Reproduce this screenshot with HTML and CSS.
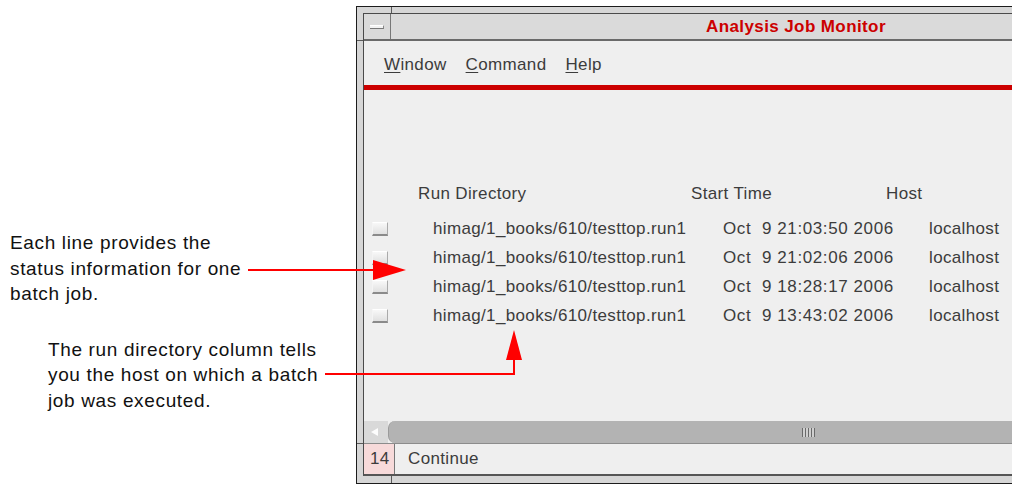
FILE: index.html
```html
<!DOCTYPE html>
<html lang="en">
<head>
  <meta charset="UTF-8">
  <title>Analysis Job Monitor</title>
  <link rel="stylesheet" href="styles.css">
</head>
<body>

  <div class="page">

    <!-- Callout texts -->
    <div class="notes">
      <p class="note note-lines">Each line provides the<br>status information for one<br>batch job.</p>
      <p class="note note-dir">The run directory column tells<br>you the host on which a batch<br>job was executed.</p>
    </div>

    <!-- Monitor window -->
    <div class="frame">
      <div class="inner">
        <div class="titlebar">
          <div class="wm-btn"><span class="wm-min"></span></div>
          <div class="title">Analysis Job Monitor</div>
        </div>

        <div class="menubar">
          <span class="menu-item"><u>W</u>indow</span>
          <span class="menu-item"><u>C</u>ommand</span>
          <span class="menu-item"><u>H</u>elp</span>
        </div>
        <div class="rule"></div>

        <div class="jobs">
          <div class="head">
            <span class="h-dir">Run Directory</span>
            <span class="h-time">Start Time</span>
            <span>Host</span>
          </div>
          <div class="row">
            <span class="check"></span>
            <span class="dir">himag/1_books/610/testtop.run1</span>
            <span class="time">Oct  9 21:03:50 2006</span>
            <span>localhost</span>
          </div>
          <div class="row">
            <span class="check"></span>
            <span class="dir">himag/1_books/610/testtop.run1</span>
            <span class="time">Oct  9 21:02:06 2006</span>
            <span>localhost</span>
          </div>
          <div class="row">
            <span class="check"></span>
            <span class="dir">himag/1_books/610/testtop.run1</span>
            <span class="time">Oct  9 18:28:17 2006</span>
            <span>localhost</span>
          </div>
          <div class="row">
            <span class="check"></span>
            <span class="dir">himag/1_books/610/testtop.run1</span>
            <span class="time">Oct  9 13:43:02 2006</span>
            <span>localhost</span>
          </div>
        </div>

        <div class="scrollbar">
          <div class="scroll-btn"><span class="arrow-left"></span></div>
          <div class="trough"><span class="grip"></span></div>
        </div>

        <div class="status">
          <span class="status-num">14</span>
          <span class="status-text">Continue</span>
        </div>
      </div>
    </div>

    <!-- Callout arrows -->
    <svg class="callouts" width="1012" height="488" viewBox="0 0 1012 488">
      <line x1="248" y1="270" x2="378" y2="270" stroke="#ff0000" stroke-width="2"/>
      <polygon points="373,260 406,270 373,280" fill="#ff0000"/>
      <polyline points="325,374 514,374 514,358" fill="none" stroke="#ff0000" stroke-width="2"/>
      <polygon points="514,330 506,360 522,360" fill="#ff0000"/>
    </svg>

  </div>

</body>
</html>
```

FILE: styles.css
```css
body {
  margin: 0;
  background: #ffffff;
  font-family: "Liberation Sans", Arial, sans-serif;
}

.page {
  position: relative;
  display: flex;
  width: 1012px;
  height: 488px;
  overflow: hidden;
}

/* callout texts */
.notes {
  flex: none;
  width: 356px;
  padding-top: 230px;
  box-sizing: border-box;
}

.note {
  margin: 0;
  font-size: 19px;
  line-height: 25.5px;
  letter-spacing: 0.65px;
  color: #111;
}

.note-lines {
  padding-left: 10px;
}

.note-dir {
  padding-left: 48px;
  margin-top: 30px;
}

.callouts {
  position: absolute;
  left: 0;
  top: 0;
  pointer-events: none;
}

/* window frame */
.frame {
  position: relative;
  flex: none;
  width: 700px;
  height: 478px;
  margin-top: 6px;
  box-sizing: border-box;
  border: 1px solid #1c1c1c;
  border-right: none;
  background: #d6d6d6;
  padding: 6px 0 7px 6px;
}

.frame::before,
.frame::after {
  content: "";
  position: absolute;
  left: 34px;
  width: 1px;
  height: 6px;
  background: #5a5a5a;
}

.frame::before {
  top: 0;
}

.frame::after {
  bottom: 0;
  height: 7px;
}

.inner {
  position: relative;
  height: 100%;
  box-sizing: border-box;
  border: 1px solid #4a4a4a;
  border-bottom: 2px solid #555;
  border-right: none;
  background: #efefef;
  display: flex;
  flex-direction: column;
  color: #3c3c3c;
  font-size: 17px;
  letter-spacing: 0.35px;
}

.inner::before,
.inner::after {
  content: "";
  position: absolute;
  left: -7px;
  width: 6px;
  height: 1px;
  background: #5a5a5a;
}

.inner::before {
  top: 26px;
}

.inner::after {
  top: 429px;
}

.titlebar {
  flex: none;
  display: flex;
  align-items: center;
  height: 25px;
  background: #dadada;
  border-bottom: 2px solid #6a6a6a;
}

.wm-btn {
  width: 27px;
  height: 100%;
  box-sizing: border-box;
  border-right: 1px solid #777;
  display: flex;
  align-items: center;
  justify-content: center;
}

.wm-min {
  width: 13px;
  height: 2px;
  background: #f2f2f2;
  border-bottom: 1px solid #777;
  border-right: 1px solid #888;
  border-top: 1px solid #fff;
}

.title {
  margin-left: 315px;
  color: #cc0000;
  font-weight: bold;
  font-size: 17px;
  letter-spacing: 0.4px;
}

.menubar {
  flex: none;
  display: flex;
  align-items: center;
  gap: 19px;
  height: 44px;
  padding: 3px 0 0 20px;
  box-sizing: border-box;
}

.menu-item u {
  text-underline-offset: 2px;
}

.rule {
  flex: none;
  height: 5px;
  background: #cc0000;
}

/* job list */
.jobs {
  flex: 1;
  padding-top: 89px;
}

.head {
  display: flex;
  height: 29px;
  align-items: center;
  padding-left: 54px;
  margin-bottom: 6px;
}

.h-dir {
  width: 273px;
}

.h-time {
  width: 195px;
}

.row {
  display: flex;
  height: 29px;
  align-items: center;
  padding-left: 8px;
  white-space: pre;
}

.check {
  width: 16px;
  height: 14px;
  margin-right: 45px;
  box-sizing: border-box;
  background: linear-gradient(#f8f8f8, #e0e0e0);
  border-top: 1px solid #fff;
  border-left: 1px solid #f4f4f4;
  border-right: 1px solid #aaa;
  border-bottom: 2px solid #8a8a8a;
}

.dir {
  width: 290px;
}

.time {
  width: 206px;
  letter-spacing: 0.6px;
}

/* scrollbar */
.scrollbar {
  flex: none;
  display: flex;
  height: 22px;
  border-bottom: 1px solid #8c8c8c;
}

.scroll-btn {
  width: 24px;
  background: #d9d9d9;
  display: flex;
  align-items: center;
  padding-left: 7px;
  box-sizing: border-box;
}

.arrow-left {
  width: 0;
  height: 0;
  border-top: 4px solid transparent;
  border-bottom: 4px solid transparent;
  border-right: 7px solid #fdfdfd;
}

.trough {
  flex: 1;
  display: flex;
  align-items: center;
  background: #b3b3b3;
  border-radius: 7px 0 0 7px;
  border-left: 1px solid #9a9a9a;
}

.grip {
  margin-left: 413px;
  width: 13px;
  height: 9px;
  background: repeating-linear-gradient(90deg, #6a6a6a 0 1px, #cfcfcf 1px 3px);
}

/* status line */
.status {
  flex: none;
  display: flex;
  align-items: center;
  height: 30px;
}

.status-num {
  width: 31px;
  height: 100%;
  box-sizing: border-box;
  padding-left: 6px;
  display: flex;
  align-items: center;
  background: #f7dada;
  border-right: 1px solid #777;
}

.status-text {
  padding-left: 13px;
}
```
